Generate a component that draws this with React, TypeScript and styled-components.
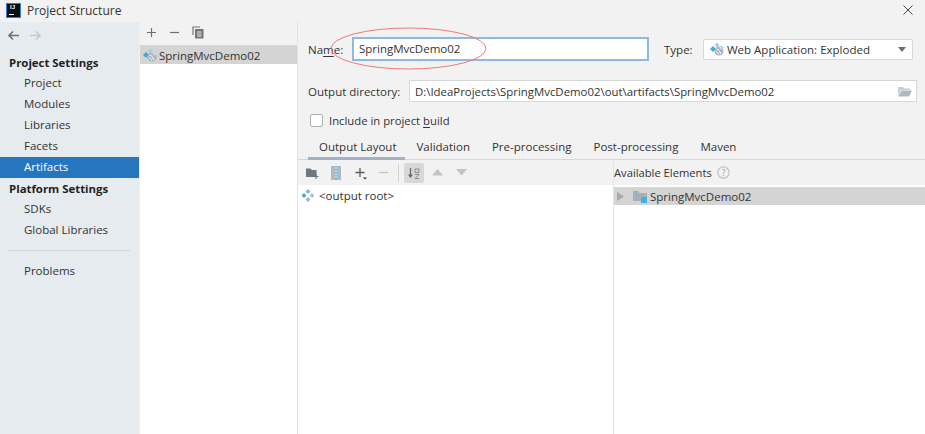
import React from "react";
import styled, { createGlobalStyle } from "styled-components";

const Global = createGlobalStyle`
  html, body { margin: 0; padding: 0; background: #fff; }
  body { font-family: "Open Sans", "Noto Sans", sans-serif; font-size: 12px; color: #2b2b2b; }
`;

const Window = styled.div`
  position: relative;
  width: 925px;
  height: 434px;
  overflow: hidden;
  display: flex;
  flex-direction: column;
`;

const TitleBar = styled.div`
  height: 22px;
  box-sizing: border-box;
  flex: none;
  background: #f2f2f2;
  display: flex;
  align-items: center;
  padding: 0 12px 2px 7px;
  gap: 7px;
`;

const AppLogo = styled.div`
  width: 13px;
  height: 13px;
  background: #0b0b12;
  box-shadow: 0 0 0 1px #2f7fd0;
  color: #fff;
  font: bold 6px/7px "Liberation Sans", sans-serif;
  padding-left: 3px;
  box-sizing: border-box;
  position: relative;
  &::after {
    content: "";
    position: absolute;
    left: 2px;
    bottom: 2px;
    width: 5px;
    height: 1px;
    background: #fff;
  }
`;

const TitleText = styled.div`
  flex: 1;
  font-size: 12px;
  color: #333;
`;

const Body = styled.div`
  flex: 1;
  display: flex;
  min-height: 0;
`;

const Sidebar = styled.div`
  width: 139px;
  flex: none;
  background: #e6ebf0;
  padding-top: 5px;
  display: flex;
  flex-direction: column;
  border-right: 1px solid #eef0f2;
`;

const NavIcons = styled.div`
  display: flex;
  gap: 9px;
  padding: 3px 0 0 7px;
  height: 22px;
  align-items: flex-start;
`;

const SectionTitle = styled.div`
  height: 21px;
  line-height: 22px;
  padding-left: 9px;
  font-weight: 700;
  font-size: 11.4px;
  color: #1f1f1f;
`;

const NavItem = styled.div<{ $active?: boolean }>`
  height: 21px;
  line-height: 20px;
  padding-left: 24px;
  font-size: 11.5px;
  color: ${(p) => (p.$active ? "#fff" : "#333")};
  background: ${(p) => (p.$active ? "#2675bf" : "transparent")};
`;

const NavDivider = styled.div`
  height: 1px;
  background: #d5d9dd;
  margin: 9px 9px 10px 8px;
`;

const ArtifactColumn = styled.div`
  width: 157px;
  flex: none;
  background: #fff;
  border-right: 1px solid #e2e2e2;
  display: flex;
  flex-direction: column;
`;

const SmallToolbar = styled.div`
  height: 21px;
  flex: none;
  background: #f2f2f2;
  border-bottom: 1px solid #d6d6d6;
  display: flex;
  align-items: center;
  gap: 12px;
  padding: 0 0 2px 6px;
`;

const ArtifactRow = styled.div`
  height: 18px;
  background: #d4d4d4;
  display: flex;
  align-items: center;
  gap: 2px;
  padding-left: 3px;
  font-size: 11.5px;
  color: #333;
`;

const Editor = styled.div`
  flex: 1;
  min-width: 0;
  background: #f2f2f2;
  display: flex;
  flex-direction: column;
`;

const FormRow = styled.div`
  display: flex;
  align-items: center;
  padding-left: 10px;
`;

const NameRow = styled(FormRow)`
  height: 24px;
  margin-top: 15px;
`;

const OutputRow = styled(FormRow)`
  height: 22px;
  margin-top: 19px;
`;

const CheckRow = styled(FormRow)`
  height: 14px;
  margin-top: 11px;
  padding-left: 12px;
  gap: 6px;
`;

const Label = styled.label<{ $width: number }>`
  width: ${(p) => p.$width}px;
  flex: none;
  font-size: 11.5px;
  color: #333;
  u { text-underline-offset: 2px; }
`;

const FocusedInput = styled.div`
  width: 297px;
  height: 24px;
  box-sizing: border-box;
  background: #fff;
  border: 2px solid #8db9e4;
  padding-left: 5px;
  line-height: 19px;
  font-size: 11.5px;
  color: #333;
`;

const TypeLabel = styled(Label)`
  margin-left: 15px;
`;

const Combo = styled.div`
  width: 210px;
  height: 21px;
  box-sizing: border-box;
  background: #fff;
  border: 1px solid #d8d8d8;
  border-radius: 2px;
  display: flex;
  align-items: center;
  gap: 3px;
  padding: 0 6px;
  font-size: 11.5px;
  color: #333;
`;

const ComboText = styled.span`
  flex: 1;
`;

const Caret = styled.span`
  width: 0;
  height: 0;
  border-left: 4px solid transparent;
  border-right: 4px solid transparent;
  border-top: 5px solid #6e6e6e;
`;

const PathInput = styled.div`
  width: 508px;
  height: 22px;
  box-sizing: border-box;
  background: #fff;
  border: 1px solid #d8d8d8;
  display: flex;
  align-items: center;
  justify-content: space-between;
  padding: 0 4px 0 5px;
  font-size: 11.4px;
  color: #333;
`;

const CheckBox = styled.span`
  width: 13px;
  height: 13px;
  box-sizing: border-box;
  background: #fff;
  border: 1px solid #b0b0b0;
  border-radius: 2px;
`;

const CheckLabel = styled.span`
  font-size: 11.3px;
  color: #333;
  u { text-underline-offset: 2px; }
`;

const Tabs = styled.div`
  height: 26px;
  margin-top: 6px;
  flex: none;
  display: flex;
  gap: 22px;
  padding-left: 21px;
  border-bottom: 1px solid #d6d6d6;
`;

const Tab = styled.div<{ $active?: boolean }>`
  position: relative;
  height: 26px;
  line-height: 28px;
  font-size: 11.5px;
  color: #333;
  margin-right: ${(p) => (p.$active ? "-2px" : "0")};
  &::after {
    content: "";
    display: ${(p) => (p.$active ? "block" : "none")};
    position: absolute;
    left: -11px;
    right: -8px;
    bottom: -1px;
    height: 3px;
    background: #a2b2c6;
  }
`;

const Panes = styled.div`
  flex: 1;
  display: flex;
  min-height: 0;
`;

const Pane = styled.div`
  display: flex;
  flex-direction: column;
  min-width: 0;
`;

const LeftPane = styled(Pane)`
  width: 315px;
  flex: none;
  border-right: 1px solid #e4e4e4;
`;

const RightPane = styled(Pane)`
  flex: 1;
`;

const PaneBar = styled.div`
  height: 25px;
  flex: none;
  display: flex;
  align-items: center;
`;

const LeftBar = styled(PaneBar)`
  padding-left: 8px;
`;

const RightBar = styled(PaneBar)`
  gap: 5px;
  font-size: 11.2px;
  color: #333;
`;

const BarItem = styled.span<{ $ml?: number }>`
  display: flex;
  margin-left: ${(p) => p.$ml ?? 0}px;
`;

const BarSep = styled.span`
  width: 1px;
  height: 18px;
  background: #d4d4d4;
  margin-left: 9px;
`;

const ToggledButton = styled.span`
  width: 20px;
  height: 20px;
  margin-left: 5px;
  background: #d8d8d8;
  border-radius: 2px;
  display: flex;
  align-items: center;
  justify-content: center;
`;

const Tree = styled.div`
  flex: 1;
  background: #fff;
`;

const RootRow = styled.div`
  height: 20px;
  display: flex;
  align-items: center;
  gap: 4px;
  padding-left: 3px;
  font-size: 11.5px;
  color: #333;
`;

const ElementTree = styled(Tree)`
  padding-top: 2px;
`;

const ElementRow = styled.div`
  height: 18px;
  background: #d4d4d4;
  display: flex;
  align-items: center;
  padding-left: 3px;
  font-size: 11.5px;
  color: #333;
  gap: 3px;
`;

const ExpandSlot = styled.span`
  display: flex;
  margin-right: 6px;
`;

const Annotation = styled.svg`
  position: absolute;
  left: 330px;
  top: 26px;
  pointer-events: none;
`;

const ArtifactIcon = () => (
  <svg width="14" height="14" viewBox="0 0 14 14">
    <path d="M3 4 6 7 3 10 0 7z" fill="#45a9dc" />
    <path d="M7 0.500 9.500 3 7 5.500 4.500 3z" fill="#a9cfe6" />
    <circle cx="9" cy="9" r="4.500" fill="#a8b4be" />
    <path d="M6.500 7c2 .2 3.800 2 4 5M6 9.500c1.200.1 2.400 1.200 2.500 3" stroke="#fff" strokeWidth="1" fill="none" />
    <path d="M11.500 3 14 5.500 11.500 8 9 5.500z" fill="#c4d7e4" />
  </svg>
);

const ArrowIcon = ({ flip, color }: { flip?: boolean; color: string }) => (
  <svg width="13" height="11" viewBox="0 0 13 11" style={flip ? { transform: "scaleX(-1)" } : undefined}>
    <path d="M12 5.500H2M6 1.500 2 5.500l4 4" stroke={color} strokeWidth="1.600" fill="none" />
  </svg>
);

const PlusIcon = ({ color = "#6e6e6e" }: { color?: string }) => (
  <svg width="11" height="11" viewBox="0 0 11 11">
    <path d="M5.500 1v9M1 5.500h9" stroke={color} strokeWidth="1.200" />
  </svg>
);

const MinusIcon = ({ color = "#6e6e6e" }: { color?: string }) => (
  <svg width="11" height="11" viewBox="0 0 11 11">
    <path d="M1 5.500h9" stroke={color} strokeWidth="1.200" />
  </svg>
);

const CopyIcon = () => (
  <svg width="12" height="13" viewBox="0 0 12 13">
    <path d="M1 9V1h7" stroke="#757575" strokeWidth="1.200" fill="none" />
    <rect x="3" y="3" width="8.500" height="9.500" fill="#757575" />
    <path d="M5 6h4.500M5 8h4.500M5 10h4.500" stroke="#e8e8e8" strokeWidth="1" />
  </svg>
);

const FolderOpenIcon = () => (
  <svg width="14" height="11" viewBox="0 0 14 11">
    <path d="M0 1h5l1 1.500h6V4H3L0 9z" fill="#c6ced4" />
    <path d="M3.500 4.500H14L11 10.500H0z" fill="#aeb9c1" />
  </svg>
);

const NewFolderIcon = () => (
  <svg width="13" height="12" viewBox="0 0 13 12">
    <path d="M0 1.500h4.500L6 3h4.500v7H0z" fill="#70777d" />
    <path d="M10 7v5M7.500 9.500h5" stroke="#70777d" strokeWidth="1.200" />
  </svg>
);

const ArchiveIcon = () => (
  <svg width="10" height="14" viewBox="0 0 10 14">
    <rect width="10" height="14" fill="#aebbc4" />
    <rect x="4" width="2" height="14" fill="#6fb7dc" />
    <path d="M4 2h2M4 5h2M4 8h2M4 11h2" stroke="#fff" strokeWidth="1" />
  </svg>
);

const PlusDropIcon = () => (
  <svg width="14" height="14" viewBox="0 0 14 14">
    <path d="M6 2v9M1.500 6.500h9" stroke="#5e5e5e" strokeWidth="1.300" />
    <path d="M9 11.500h4l-2 2z" fill="#333" />
  </svg>
);

const SortIcon = () => (
  <svg width="14" height="14" viewBox="0 0 14 14">
    <path d="M3.500 2v9" stroke="#666" strokeWidth="1.300" />
    <path d="M1 8.500 3.500 12 6 8.500z" fill="#666" />
    <path d="M8 3h4v3.500H8zM8 8.500h4L8 12.500h4" stroke="#8a8a8a" strokeWidth="1" fill="none" />
  </svg>
);

const TriangleIcon = ({ down }: { down?: boolean }) => (
  <svg width="11" height="7" viewBox="0 0 11 7">
    <path d={down ? "M0 0h11L5.500 6.500z" : "M0 6.500h11L5.500 0z"} fill="#c3c3c3" />
  </svg>
);

const RootIcon = () => (
  <svg width="14" height="13" viewBox="0 0 14 13">
    <path d="M7 0 9.500 2.500 7 5 4.500 2.500z" fill="#7fb9dd" />
    <path d="M3 4 5.500 6.500 3 9 .5 6.500z" fill="#45a9dc" />
    <path d="M11 4 13.500 6.500 11 9 8.500 6.500z" fill="#9cc8e4" />
    <path d="M7 8 9.500 10.500 7 13 4.500 10.500z" fill="#a9b8c2" />
  </svg>
);

const HelpIcon = () => (
  <svg width="13" height="13" viewBox="0 0 13 13">
    <circle cx="6.500" cy="6.500" r="5.700" fill="none" stroke="#c2c2c2" strokeWidth="1.200" />
    <text x="6.500" y="9.500" textAnchor="middle" fontSize="8.500" fill="#9a9a9a" fontFamily="Open Sans">?</text>
  </svg>
);

const ExpandIcon = () => (
  <svg width="7" height="9" viewBox="0 0 7 9">
    <path d="M0 0 7 4.500 0 9z" fill="#a8a8a8" />
  </svg>
);

const ModuleFolderIcon = () => (
  <svg width="14" height="13" viewBox="0 0 14 13">
    <path d="M0 1h5l1.500 2H14v8H0z" fill="#a4afb8" />
    <rect x="8" y="7" width="6" height="6" fill="#3fb2e2" />
  </svg>
);

const CloseIcon = () => (
  <svg width="10" height="10" viewBox="0 0 10 10">
    <path d="M.5.500l9 9M9.500.500l-9 9" stroke="#444" strokeWidth="1" />
  </svg>
);

export default function App() {
  return (
    <Window>
      <Global />
      <TitleBar>
        <AppLogo>IJ</AppLogo>
        <TitleText>Project Structure</TitleText>
        <CloseIcon />
      </TitleBar>
      <Body>
        <Sidebar>
          <NavIcons>
            <ArrowIcon color="#6e6e6e" />
            <ArrowIcon flip color="#c4c8cc" />
          </NavIcons>
          <SectionTitle>Project Settings</SectionTitle>
          <NavItem>Project</NavItem>
          <NavItem>Modules</NavItem>
          <NavItem>Libraries</NavItem>
          <NavItem>Facets</NavItem>
          <NavItem $active>Artifacts</NavItem>
          <SectionTitle>Platform Settings</SectionTitle>
          <NavItem>SDKs</NavItem>
          <NavItem>Global Libraries</NavItem>
          <NavDivider />
          <NavItem>Problems</NavItem>
        </Sidebar>
        <ArtifactColumn>
          <SmallToolbar>
            <PlusIcon />
            <MinusIcon />
            <CopyIcon />
          </SmallToolbar>
          <ArtifactRow>
            <ArtifactIcon />
            SpringMvcDemo02
          </ArtifactRow>
        </ArtifactColumn>
        <Editor>
          <NameRow>
            <Label $width={44}>Na<u>m</u>e:</Label>
            <FocusedInput>SpringMvcDemo02</FocusedInput>
            <TypeLabel $width={39}>Type:</TypeLabel>
            <Combo>
              <ArtifactIcon />
              <ComboText>Web Application: Exploded</ComboText>
              <Caret />
            </Combo>
          </NameRow>
          <OutputRow>
            <Label $width={101}>Output directory:</Label>
            <PathInput>
              D:\IdeaProjects\SpringMvcDemo02\out\artifacts\SpringMvcDemo02
              <FolderOpenIcon />
            </PathInput>
          </OutputRow>
          <CheckRow>
            <CheckBox />
            <CheckLabel>Include in project <u>b</u>uild</CheckLabel>
          </CheckRow>
          <Tabs>
            <Tab $active>Output Layout</Tab>
            <Tab>Validation</Tab>
            <Tab>Pre-processing</Tab>
            <Tab>Post-processing</Tab>
            <Tab>Maven</Tab>
          </Tabs>
          <Panes>
            <LeftPane>
              <LeftBar>
                <BarItem><NewFolderIcon /></BarItem>
                <BarItem $ml={12}><ArchiveIcon /></BarItem>
                <BarItem $ml={13}><PlusDropIcon /></BarItem>
                <BarItem $ml={10}><MinusIcon color="#c0c0c0" /></BarItem>
                <BarSep />
                <ToggledButton><SortIcon /></ToggledButton>
                <BarItem $ml={8}><TriangleIcon /></BarItem>
                <BarItem $ml={13}><TriangleIcon down /></BarItem>
              </LeftBar>
              <Tree>
                <RootRow>
                  <RootIcon />
                  {"<output root>"}
                </RootRow>
              </Tree>
            </LeftPane>
            <RightPane>
              <RightBar>
                Available Elements
                <HelpIcon />
              </RightBar>
              <ElementTree>
                <ElementRow>
                  <ExpandSlot><ExpandIcon /></ExpandSlot>
                  <ModuleFolderIcon />
                  SpringMvcDemo02
                </ElementRow>
              </ElementTree>
            </RightPane>
          </Panes>
        </Editor>
      </Body>
      <Annotation width="160" height="46" viewBox="0 0 160 46">
        <ellipse cx="78.500" cy="22.500" rx="77.500" ry="20.500" fill="none" stroke="#f0787c" strokeWidth="1" />
      </Annotation>
    </Window>
  );
}
